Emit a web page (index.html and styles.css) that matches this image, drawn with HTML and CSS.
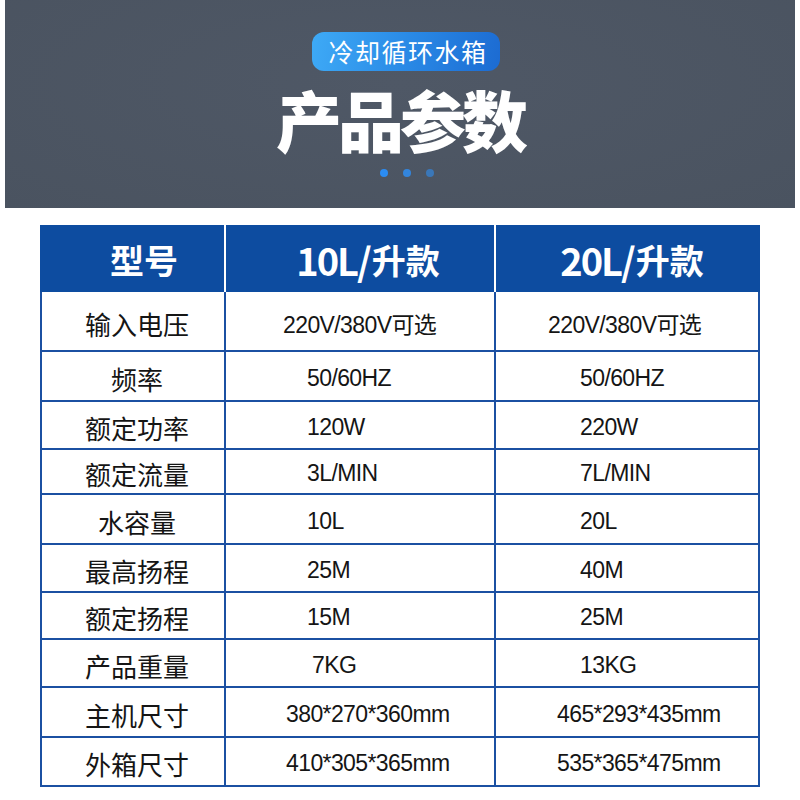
FILE: index.html
```html
<!DOCTYPE html>
<html lang="zh-CN">
<head>
<meta charset="utf-8">
<title>产品参数</title>
<link rel="stylesheet" href="styles.css">
</head>
<body>
<header class="hero">
  <div class="pill">冷却循环水箱</div>
  <h1 class="title">产品参数</h1>
  <div class="dots"><span class="dot d1"></span><span class="dot d2"></span><span class="dot d3"></span></div>
</header>

<section class="spec">
  <div class="spec-head">
    <div class="hcell">型号</div>
    <div class="hcell"><span class="num">10L/</span>升款</div>
    <div class="hcell"><span class="num">20L/</span>升款</div>
  </div>
  <div class="spec-body">
    <div class="lab">输入电压</div><div class="val v2 wide1">220V/380V可选</div><div class="val v3 wide1">220V/380V可选</div>
    <div class="lab">频率</div><div class="val v2">50/60HZ</div><div class="val v3">50/60HZ</div>
    <div class="lab">额定功率</div><div class="val v2">120W</div><div class="val v3">220W</div>
    <div class="lab">额定流量</div><div class="val v2">3L/MIN</div><div class="val v3">7L/MIN</div>
    <div class="lab">水容量</div><div class="val v2">10L</div><div class="val v3">20L</div>
    <div class="lab">最高扬程</div><div class="val v2">25M</div><div class="val v3">40M</div>
    <div class="lab">额定扬程</div><div class="val v2">15M</div><div class="val v3">25M</div>
    <div class="lab">产品重量</div><div class="val v2 kg">7KG</div><div class="val v3">13KG</div>
    <div class="lab">主机尺寸</div><div class="val v2 dim">380*270*360mm</div><div class="val v3 dim">465*293*435mm</div>
    <div class="lab">外箱尺寸</div><div class="val v2 dim">410*305*365mm</div><div class="val v3 dim">535*365*475mm</div>
  </div>
</section>
</body>
</html>
```

FILE: styles.css
```css
* { box-sizing: border-box; }

body {
  margin: 0;
  background: #ffffff;
  font-family: "Noto Sans CJK SC", "Noto Sans", sans-serif;
}

.hero {
  margin: 0 5px;
  height: 208px;
  background: #4c5562;
  background-image: radial-gradient(ellipse at 50% 40%, #4f5866 0%, #4a5360 100%);
  display: flex;
  flex-direction: column;
  align-items: center;
  padding-top: 32px;
}

.pill {
  width: 188px;
  height: 39px;
  margin-left: 12px;
  border-radius: 12px;
  background: linear-gradient(100deg, #3eaaf6 0%, #2a8ae6 50%, #1c6bd2 100%);
  color: #ffffff;
  font-size: 25px;
  line-height: 39px;
  letter-spacing: 1.5px;
  text-align: center;
  padding-left: 4px;
}

.title {
  margin: 14px 0 0;
  font-size: 66px;
  line-height: 66px;
  font-weight: 900;
  color: #ffffff;
  letter-spacing: -4px;
  padding-left: 0;
}

.dots {
  margin-top: 18px;
  display: flex;
  gap: 15px;
  margin-left: 14px;
}

.dot {
  width: 8px;
  height: 8px;
  border-radius: 50%;
}
.d1 { background: #2b8cf2; }
.d2 { background: #3385dc; }
.d3 { background: #3a77b8; }

.spec {
  margin: 17px 0 0 40px;
  width: 720px;
}

.spec-head {
  display: grid;
  grid-template-columns: 184px 268px 264px;
  gap: 2px;
  background: #ffffff;
  height: 67px;
}

.hcell {
  background: #0d4ca0;
  color: #ffffff;
  font-weight: 700;
  font-size: 34px;
  display: flex;
  align-items: center;
  justify-content: center;
  padding-top: 2px;
}
.hcell:nth-child(1) { padding-left: 24px; }
.hcell:nth-child(2) { padding-left: 16px; }
.hcell:nth-child(3) { padding-left: 8px; }

.num {
  font-size: 38px;
  letter-spacing: -2px;
  margin-right: 2px;
}

.spec-body {
  display: grid;
  grid-template-columns: 182px 268px 262px;
  grid-template-rows: 58px 48px 46px 43px 48px 46px 45px 46px 48px 47px;
  gap: 2px;
  padding: 0 2px 2px 2px;
  background: #1b50a2;
}

.lab, .val {
  background: #ffffff;
  color: #151515;
  display: flex;
  align-items: center;
  padding-top: 4px;
}

.lab {
  justify-content: center;
  font-size: 26px;
  padding-left: 8px;
}

.val {
  font-family: "Liberation Sans", "Noto Sans CJK SC", sans-serif;
  font-size: 23px;
  letter-spacing: -0.6px;
}

.v2 { padding-left: 81px; }
.v3 { padding-left: 84px; }
.v2.wide1 { padding-left: 57px; }
.v3.wide1 { padding-left: 52px; }
.v2.dim { padding-left: 60px; }
.v3.dim { padding-left: 61px; }
.v2.kg { padding-left: 86px; }
```
